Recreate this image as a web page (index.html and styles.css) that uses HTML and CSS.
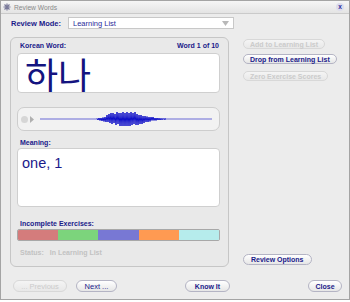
FILE: index.html
```html
<!DOCTYPE html>
<html>
<head>
<meta charset="utf-8">
<link rel="stylesheet" href="styles.css">
</head>
<body>
<div class="window">
  <div class="titlebar">
    <svg class="ticon" width="8" height="8" viewBox="0 0 8 8"><path d="M4 0.5V7.5M0.5 4H7.5M1.5 1.5L6.5 6.5M6.5 1.5L1.5 6.5" stroke="#7a7a9a" stroke-width="1.2"/></svg>
    <span class="ttext">Review Words</span>
    <span class="tclose">x</span>
  </div>
  <div class="moderow">
    <span class="modelabel">Review Mode:</span>
    <div class="select"><span>Learning List</span><svg width="7" height="5" viewBox="0 0 7 5"><path d="M0 0H7L3.5 5Z" fill="#b8b8b8"/></svg></div>
  </div>
  <div class="main">
    <div class="panel">
      <div class="label lrow"><span>Korean Word:</span><span>Word 1 of 10</span></div>
      <div class="wordbox"><span class="kw">하나</span></div>
      <div class="audio">
        <span class="dot"></span>
        <svg class="play" width="4" height="7" viewBox="0 0 4 7"><path d="M0 0L4 3.5L0 7Z" fill="#b0b0b0"/></svg>
        <svg class="wave" width="176" height="24" viewBox="0 0 176 24">
          <line x1="0" y1="12" x2="172" y2="12" stroke="#6a6ad6" stroke-width="1"/>
          <polyline fill="none" stroke="#1010c8" stroke-width="1" points="57,11.5 58,13 59,11 60,13.5 61,11 62,14 63,10.5 64,14.5 65,10 66,15 67,8 68,15 69,7 70,16 71,6 72,17 73,6 74,16 75,7 76,18 77,5 78,17 79,6 80,19 81,6 82,19 83,5 84,19 85,6 86,19 87,5 88,19 89,6 90,19 91,5 92,18 93,6 94,17 95,5 96,18 97,7 98,18 99,8 100,17 101,8 102,17 103,9 104,16 105,9 106,15 107,9.5 108,15 109,10 110,14.5 111,10 112,13.5 113,10 114,13.5 115,11 116,13.5 117,11 118,13 119,11.2 120,13 121,11.4 122,12.8 123,11.5 124,12.5 125,11.7 126,12.3"/>
        </svg>
      </div>
      <div class="label mlabel">Meaning:</div>
      <div class="meaningbox">one, 1</div>
      <div class="label ilabel">Incomplete Exercises:</div>
      <div class="bar">
        <span class="seg s1"></span><span class="seg s2"></span><span class="seg s3"></span><span class="seg s4"></span><span class="seg s5"></span>
      </div>
      <div class="status"><span>Status:</span><span>In Learning List</span></div>
    </div>
    <div class="side">
      <div class="btn small disabled b1">Add to Learning List</div>
      <div class="btn small b2">Drop from Learning List</div>
      <div class="btn small disabled b3">Zero Exercise Scores</div>
      <div class="btn opts">Review Options</div>
    </div>
  </div>
  <div class="bottom">
    <div class="btn big disabled prev">... Previous</div>
    <div class="btn big normal next">Next ...</div>
    <div class="btn big know">Know It</div>
    <div class="btn big close">Close</div>
  </div>
</div>
</body>
</html>
```
FILE: styles.css
```css
html, body {
  margin: 0;
  padding: 0;
  background: #ffffff;
}
body {
  font-family: "Liberation Sans", Arial, sans-serif;
  color: #1a1a8a;
}
.window {
  width: 348px;
  height: 298px;
  border: 1px solid #a4a4a4;
  background: #ececec;
  display: flex;
  flex-direction: column;
}
.titlebar {
  height: 12px;
  border-bottom: 1px solid #cacaca;
  background: linear-gradient(#f6f6f6, #e4e4e4);
  display: flex;
  align-items: center;
}
.ticon {
  margin-left: 2px;
}
.ttext {
  margin-left: 3px;
  font-size: 6.7px;
  color: #8a8a8a;
}
.tclose {
  margin-left: auto;
  margin-right: 5px;
  width: 8px;
  height: 8px;
  border-radius: 50%;
  background: #dcdcec;
  color: #2a2a9a;
  font-size: 6.5px;
  font-weight: bold;
  line-height: 7px;
  text-align: center;
}
.moderow {
  margin-top: 3px;
  height: 12px;
  display: flex;
  align-items: center;
  padding-left: 10px;
}
.modelabel {
  font-size: 7.5px;
  font-weight: bold;
  width: 57px;
}
.select {
  width: 156px;
  height: 10px;
  background: #ffffff;
  border: 1px solid #c8c8c8;
  display: flex;
  align-items: center;
  justify-content: space-between;
  padding: 0 4px 0 4px;
  font-size: 7.5px;
  color: #2a2a9a;
}
.main {
  margin-top: 8px;
  display: flex;
  align-items: flex-start;
}
.panel {
  margin-left: 9px;
  width: 203px;
  height: 228px;
  border: 1px solid #c6c6c6;
  border-radius: 6px;
  background: #e9e9e9;
  padding: 0 8px 0 6px;
  display: flex;
  flex-direction: column;
}
.label {
  font-size: 7px;
  font-weight: bold;
  line-height: 8px;
  height: 8px;
  padding-left: 3px;
}
.lrow {
  margin-top: 4px;
  display: flex;
  justify-content: space-between;
  padding-right: 1px;
}
.wordbox {
  margin-top: 3px;
  height: 38px;
  background: #ffffff;
  border: 1px solid #cfcfcf;
  border-radius: 4px;
  padding-left: 7px;
  display: flex;
  align-items: center;
}
.kw {
  font-family: "Noto Sans CJK KR", sans-serif;
  font-size: 36px;
  line-height: 36px;
  font-weight: 400;
  color: #141480;
}
.audio {
  margin-top: 14px;
  height: 22px;
  border: 1px solid #cdcdcd;
  border-radius: 7px;
  background: #f2f2f2;
  display: flex;
  align-items: center;
}
.dot {
  margin-left: 3px;
  width: 7px;
  height: 7px;
  border-radius: 50%;
  background: #d6d6d6;
}
.play {
  margin-left: 2px;
}
.wave {
  margin-left: 6px;
}
.mlabel {
  margin-top: 8px;
}
.meaningbox {
  margin-top: 1px;
  height: 51px;
  background: #ffffff;
  border: 1px solid #cfcfcf;
  border-radius: 4px;
  font-size: 14.5px;
  line-height: 17px;
  padding: 6px 0 0 4px;
  color: #1a1a8a;
}
.ilabel {
  margin-top: 13px;
}
.bar {
  margin-top: 1px;
  height: 10px;
  border: 1px solid #a8a8a8;
  border-radius: 2px;
  display: flex;
  overflow: hidden;
}
.seg {
  flex: 1;
}
.s1 { background: #d47c7c; }
.s2 { background: #7cd47c; }
.s3 { background: #7878d4; }
.s4 { background: #ff9a52; }
.s5 { background: #b6ecec; }
.status {
  margin-top: 8px;
  height: 8px;
  line-height: 8px;
  font-size: 7px;
  font-weight: bold;
  color: #c2c2c2;
  padding-left: 3px;
  display: flex;
  gap: 6px;
}
.side {
  margin-left: 14px;
  display: flex;
  flex-direction: column;
  align-items: flex-start;
}
.btn {
  box-sizing: border-box;
  display: flex;
  align-items: center;
  justify-content: center;
  border: 1px solid #b4b4c4;
  background: linear-gradient(#ffffff, #e6e6e6);
  color: #1a1a8a;
  font-weight: bold;
  font-size: 7px;
  white-space: nowrap;
}
.btn.disabled {
  color: #cbcbcb;
  border-color: #d8d8d8;
  background: linear-gradient(#f4f4f4, #e8e8e8);
}
.small {
  height: 10px;
  border-radius: 5px;
  padding: 0 6px;
}
.b1 { margin-top: 2px; }
.b2 { margin-top: 5px; }
.b3 { margin-top: 7px; }
.opts {
  margin-top: 173px;
  height: 11px;
  border-radius: 6px;
  padding: 0 7px;
}
.bottom {
  margin-top: 13px;
  display: flex;
  align-items: center;
}
.big {
  height: 12px;
  border-radius: 6px;
}
.prev {
  margin-left: 12px;
  width: 54px;
  font-weight: normal;
  font-size: 7.5px;
}
.next {
  margin-left: 9px;
  width: 41px;
  font-weight: normal;
  font-size: 7.5px;
}
.know {
  margin-left: 68px;
  width: 45px;
}
.close {
  margin-left: auto;
  margin-right: 7px;
  width: 34px;
}
```
